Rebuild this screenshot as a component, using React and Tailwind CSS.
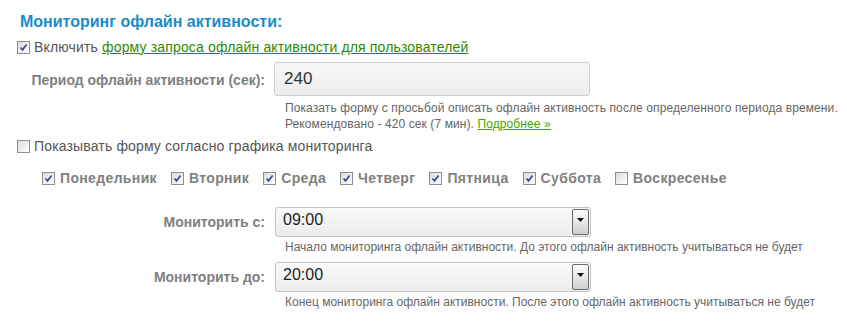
import React from "react";

function Box({ checked }) {
  return (
    <span className="inline-flex h-[13px] w-[13px] shrink-0 items-center justify-center border border-[#8e8f8f] bg-gradient-to-br from-[#dcdcdc] to-[#ffffff]">
      {checked && (
        <svg width="9" height="9" viewBox="0 0 9 9">
          <path d="M1.5 4.5 L3.5 6.8 L7.6 1.5" fill="none" stroke="#3b4a93" strokeWidth="1.7" />
        </svg>
      )}
    </span>
  );
}

function Select({ value }) {
  return (
    <div className="flex h-[30px] w-[316px] items-stretch rounded-[3px] border border-[#c4c4c4] bg-gradient-to-b from-[#fafafa] to-[#ececec] p-px">
      <div className="flex-1 pl-[6px] pt-px text-[16px] leading-[20px] text-[#222]">{value}</div>
      <div className="flex w-[17px] justify-center rounded-[2px] border border-[#6b6b6b] bg-gradient-to-b from-[#ffffff] to-[#cfcfcf] pt-[8px]">
        <svg width="7" height="4" viewBox="0 0 7 4">
          <path d="M0 0 H7 L3.5 4 Z" fill="#111" />
        </svg>
      </div>
    </div>
  );
}

export default function App() {
  const days = [
    ["Понедельник", true],
    ["Вторник", true],
    ["Среда", true],
    ["Четверг", true],
    ["Пятница", true],
    ["Суббота", true],
    ["Воскресенье", false],
  ];
  return (
    <div className="h-[322px] w-[847px] bg-white pl-[17px] pt-[12px] font-['Liberation_Sans',Arial,sans-serif] text-[14px] text-[#555]">
      <div className="pl-[3px] text-[16px] font-bold leading-[20px] text-[#1a8bcb]">Мониторинг офлайн активности:</div>
      <div className="mt-[6px] flex items-center gap-[4px] leading-[18px] tracking-[0.15px]">
        <Box checked />
        <span>
          Включить <span className="text-[#2f8a00] underline">форму запроса офлайн активности для пользователей</span>
        </span>
      </div>
      <div className="mt-[6px] flex">
        <div className="w-[248px] pt-[9px] text-right font-bold leading-[18px] text-[#808080]">Период офлайн активности (сек):</div>
        <div className="ml-[9px]">
          <div className="flex h-[34px] w-[316px] items-center rounded-[3px] border border-[#cfcfcf] bg-gradient-to-b from-[#f7f7f7] to-[#ececec] pl-[9px] text-[17px] text-[#333]">240</div>
          <div className="ml-[11px] mt-[4px] text-[12px] leading-[16px] tracking-[0.1px] text-[#666]">
            <div>Показать форму с просьбой описать офлайн активность после определенного периода времени.</div>
            <div>
              Рекомендовано - 420 сек (7 мин). <span className="text-[#3fa300] underline">Подробнее »</span>
            </div>
          </div>
        </div>
      </div>
      <div className="mt-[5px] flex items-center gap-[4px] leading-[18px] tracking-[0.15px]">
        <Box />
        <span>Показывать форму согласно графика мониторинга</span>
      </div>
      <div className="mt-[14px] flex gap-[14px] pl-[25px] font-bold leading-[18px] tracking-[0.35px] text-[#808080]">
        {days.map(([d, c]) => (
          <div key={d} className="flex items-center gap-[5px]">
            <Box checked={c} />
            <span>{d}</span>
          </div>
        ))}
      </div>
      <div className="mt-[20px] flex">
        <div className="w-[248px] pt-[6px] text-right font-bold leading-[18px] text-[#808080]">Мониторить с:</div>
        <div className="ml-[10px]">
          <Select value="09:00" />
          <div className="ml-[10px] mt-[2px] text-[12px] leading-[16px] text-[#666]">Начало мониторинга офлайн активности. До этого офлайн активность учитываться не будет</div>
        </div>
      </div>
      <div className="mt-[7px] flex">
        <div className="w-[248px] pt-[6px] text-right font-bold leading-[18px] text-[#808080]">Мониторить до:</div>
        <div className="ml-[10px]">
          <Select value="20:00" />
          <div className="ml-[10px] mt-[2px] text-[12px] leading-[16px] text-[#666]">Конец мониторинга офлайн активности. После этого офлайн активность учитываться не будет</div>
        </div>
      </div>
    </div>
  );
}
